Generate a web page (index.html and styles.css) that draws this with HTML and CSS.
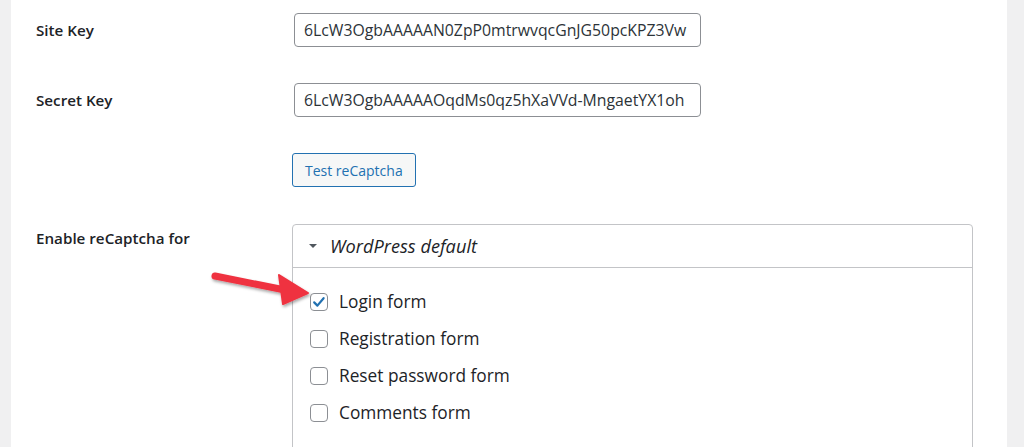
FILE: index.html
```html
<!DOCTYPE html>
<html lang="en">
<head>
  <meta charset="UTF-8">
  <title>reCaptcha settings</title>
  <link rel="stylesheet" href="styles.css">
</head>
<body>

<div class="wrap">
  <div class="row">
    <div class="label">Site Key</div>
    <input class="key" type="text" value="6LcW3OgbAAAAAN0ZpP0mtrwvqcGnJG50pcKPZ3Vw">
  </div>

  <div class="row">
    <div class="label">Secret Key</div>
    <input class="key" type="text" value="6LcW3OgbAAAAAOqdMs0qz5hXaVVd-MngaetYX1oh">
  </div>

  <div class="row">
    <div class="label"></div>
    <button class="test">Test reCaptcha</button>
  </div>

  <div class="row top">
    <div class="label label-top">Enable reCaptcha for</div>
    <div class="group">
      <div class="group-head">
        <span class="caret"></span>
        <em>WordPress default</em>
      </div>
      <ul class="options">
        <li><span class="cb checked"><svg viewBox="0 0 18 18" width="18" height="18"><path d="M4.2 9.4 L7.4 12.6 L13.6 5.2" fill="none" stroke="#2271b1" stroke-width="2.2" stroke-linecap="round" stroke-linejoin="round"/></svg></span>Login form</li>
        <li><span class="cb"></span>Registration form</li>
        <li><span class="cb"></span>Reset password form</li>
        <li><span class="cb"></span>Comments form</li>
      </ul>
    </div>
  </div>

  <!-- annotation arrow -->
  <svg class="arrow" width="120" height="50" viewBox="0 0 120 50">
    <defs>
      <filter id="shadow" x="-20%" y="-40%" width="140%" height="180%">
        <feDropShadow dx="1" dy="2" stdDeviation="1.5" flood-color="#000" flood-opacity="0.35"/>
      </filter>
    </defs>
    <g filter="url(#shadow)">
      <path d="M8 10 L78 24" stroke="#ef3340" stroke-width="7" stroke-linecap="round"/>
      <path d="M72 9 L101 27 L76 38 Z" fill="#ef3340" stroke="#ef3340" stroke-width="2" stroke-linejoin="round"/>
    </g>
  </svg>
</div>

</body>
</html>
```

FILE: styles.css
```css
body {
  margin: 0;
  padding: 0;
  background-color: #f0f0f1;
  font-family: "Open Sans", "Noto Sans", sans-serif;
  color: #1d2327;
}

.wrap {
  position: relative;
  margin: 0 17px 0 11px;
  height: 447px;
  overflow: hidden;
  background-color: #fff;
  padding: 13px 0 0 25px;
  box-sizing: border-box;
}

.row {
  display: flex;
  align-items: center;
  margin-bottom: 36px;
}

.row.top {
  align-items: flex-start;
}

.label {
  width: 258px;
  flex-shrink: 0;
  font-size: 15.2px;
  font-weight: 600;
}

.label-top {
  padding-top: 5px;
}

.key {
  width: 407px;
  height: 34px;
  box-sizing: border-box;
  border: 1px solid #8c8f94;
  border-radius: 4px;
  padding: 0 9px;
  font-family: inherit;
  font-size: 15.8px;
  color: #2c3338;
}

.test {
  margin-left: -2px;
  height: 34px;
  padding: 0 12px;
  border: 1px solid #2271b1;
  border-radius: 3px;
  background-color: #f6f7f7;
  color: #2271b1;
  font-family: inherit;
  font-size: 14px;
}

.group {
  margin-left: -2px;
  margin-top: 1px;
  width: 681px;
  height: 260px;
  border: 1px solid #c3c4c7;
  border-radius: 4px;
  box-sizing: border-box;
}

.group-head {
  height: 42px;
  border-bottom: 1px solid #c3c4c7;
  display: flex;
  align-items: center;
  padding-left: 16px;
  font-size: 18.2px;
}

.caret {
  width: 0;
  height: 0;
  border-left: 4px solid transparent;
  border-right: 4px solid transparent;
  border-top: 4px solid #50575e;
  margin-right: 13px;
}

.options {
  list-style: none;
  margin: 0;
  padding: 15px 0 0 17px;
}

.options li {
  display: flex;
  align-items: center;
  height: 37px;
  font-size: 17.3px;
}

.cb {
  width: 18px;
  height: 18px;
  flex-shrink: 0;
  box-sizing: border-box;
  border: 1px solid #8c8f94;
  border-radius: 4px;
  margin-right: 11px;
  display: flex;
  align-items: center;
  justify-content: center;
}

.cb svg {
  margin: -1px;
}

.arrow {
  position: absolute;
  left: 196px;
  top: 266px;
}
```
